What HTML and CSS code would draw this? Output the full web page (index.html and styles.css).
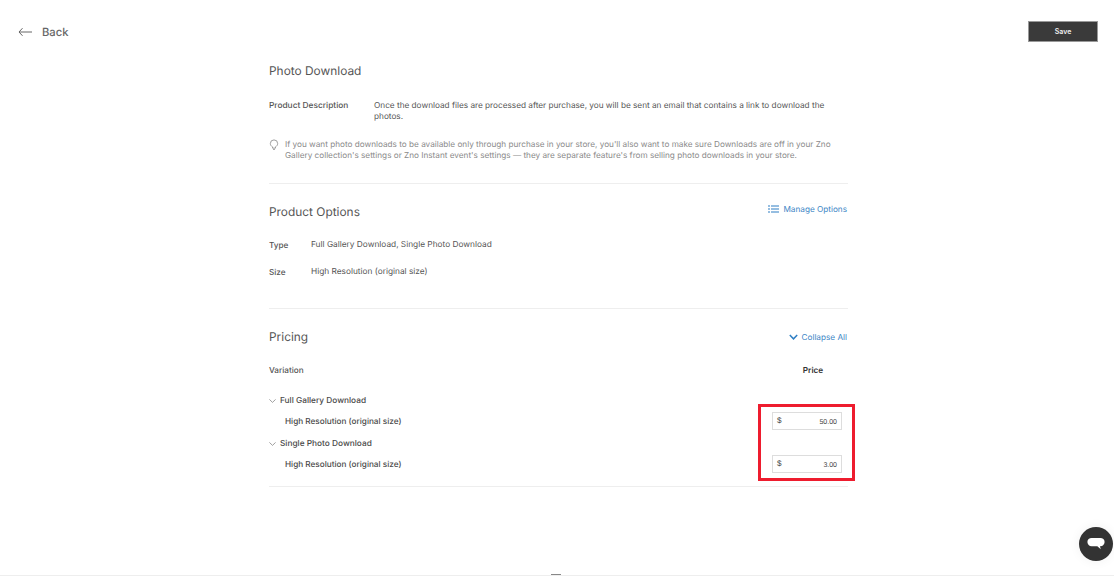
FILE: index.html
```html
<!DOCTYPE html>
<html lang="en">
<head>
<meta charset="utf-8">
<title>Photo Download</title>
<link rel="stylesheet" href="styles.css">
</head>
<body>
<div class="page">
  <header class="topbar">
    <a class="back">
      <svg class="back-icon" width="14" height="10" viewBox="0 0 14 10"><path d="M4.500 1.200 1 5l3.500 3.800M1 5h13" fill="none" stroke="#666" stroke-width="1"/></svg>
      <span>Back</span>
    </a>
    <button class="save">Save</button>
  </header>
  <main class="content">
    <section class="sec-desc">
      <h2 class="title">Photo Download</h2>
      <div class="desc-row">
        <div class="desc-label">Product Description</div>
        <div class="desc-text">Once the download files are processed after purchase, you will be sent an email that contains a link to download the photos.</div>
      </div>
      <div class="tip">
        <svg class="tip-icon" width="10" height="11" viewBox="0 0 10 12"><path d="M3.400 8.600C2.200 7.900 1 6.800 1 5a4 4 0 0 1 8 0c0 1.800-1.200 2.900-2.400 3.600V10H3.400zM4 11.400h2" fill="none" stroke="#8a8a8a" stroke-width=".9"/></svg>
        <p>If you want photo downloads to be available only through purchase in your store, you'll also want to make sure Downloads are off in your Zno Gallery collection's settings or Zno Instant event's settings — they are separate feature's from selling photo downloads in your store.</p>
      </div>
    </section>
    <section class="sec-options">
      <div class="sec-head">
        <h2 class="title">Product Options</h2>
        <a class="link link-manage">
          <svg width="11" height="8" viewBox="0 0 11 8"><path d="M0 1h2M3 1h8M0 4h2M3 4h8M0 7h2M3 7h8" stroke="#2f7fc4" stroke-width="1.100"/></svg>
          <span>Manage Options</span>
        </a>
      </div>
      <div class="opt-row"><span class="opt-label">Type</span><span class="opt-value">Full Gallery Download, Single Photo Download</span></div>
      <div class="opt-row"><span class="opt-label">Size</span><span class="opt-value">High Resolution (original size)</span></div>
    </section>
    <section class="sec-pricing">
      <div class="sec-head">
        <h2 class="title">Pricing</h2>
        <a class="link link-collapse">
          <svg width="9" height="6" viewBox="0 0 9 6"><path d="M.8 1 4.500 4.800 8.200 1" fill="none" stroke="#2f7fc4" stroke-width="1.500"/></svg>
          <span>Collapse All</span>
        </a>
      </div>
      <div class="price-head"><span class="var-head">Variation</span><span class="price-col">Price</span></div>
      <div class="group">
        <div class="group-name"><svg width="7" height="4" viewBox="0 0 7 4"><path d="M.4.400 3.500 3.400 6.600.400" fill="none" stroke="#888" stroke-width=".8"/></svg><span>Full Gallery Download</span></div>
        <div class="variant"><span>High Resolution (original size)</span><div class="price-input"><span>$</span><span class="amount">50.00</span></div></div>
      </div>
      <div class="group">
        <div class="group-name"><svg width="7" height="4" viewBox="0 0 7 4"><path d="M.4.400 3.500 3.400 6.600.400" fill="none" stroke="#888" stroke-width=".8"/></svg><span>Single Photo Download</span></div>
        <div class="variant"><span>High Resolution (original size)</span><div class="price-input"><span>$</span><span class="amount">3.00</span></div></div>
      </div>
      <div class="highlight"></div>
    </section>
  </main>
  <div class="handle"></div>
  <div class="chat">
    <svg width="18" height="15" viewBox="0 0 20 17"><path d="M5 1h10a4 4 0 0 1 0 9.500h-.5l.9 3.500-3.900-3.500H5A4 4 0 0 1 5 1z" fill="#fff"/></svg>
  </div>
</div>
</body>
</html>
```
FILE: styles.css
```css
* { box-sizing: border-box; }
html, body { margin: 0; padding: 0; background: #fff; }
body { font-family: Inter, "Liberation Sans", sans-serif; color: #555; font-size: 8.2px; text-rendering: geometricPrecision; }
.page { position: relative; width: 1114px; height: 576px; overflow: hidden; border-bottom: 1px solid #eee; }
.topbar { display: flex; justify-content: space-between; align-items: flex-start; padding: 21px 16px 0 18px; height: 62px; }
.back { display: flex; align-items: center; gap: 10px; height: 21px; font-size: 11.2px; font-weight: 500; color: #666; }
.back-icon { display: block; }
.save { width: 70px; height: 21px; border: 1px solid #999; background: #3a3a3a; color: #eee; font: 600 7px Inter, sans-serif; padding: 0; }
.content { width: 579px; margin-left: 269px; }
.title { margin: 0; font-size: 11.9px; font-weight: 400; color: #555; line-height: 18px; }
.sec-desc { height: 122px; border-bottom: 1px solid #eee; }
.desc-row { display: flex; margin-top: 20px; line-height: 11px; }
.desc-label { width: 105px; flex: none; font-weight: 500; font-size: 8.35px; padding-top: 1px; }
.desc-text { width: 458px; color: #555; font-size: 8.23px; }
.tip { display: flex; gap: 6px; margin-top: 17px; color: #8a8a8a; line-height: 11px; }
.tip p { margin: 0; width: 556px; }
.tip-icon { flex: none; margin-top: 0; }
.sec-options { height: 125px; border-bottom: 1px solid #eee; padding-top: 19px; }
.sec-head { display: flex; justify-content: space-between; align-items: flex-start; }
.link { display: flex; align-items: center; gap: 5px; color: #3d86c6; line-height: 12px; padding-right: 1px; }
.link-manage { gap: 4px; }
.link-collapse { gap: 4px; margin-top: 3px; }
.opt-row { display: flex; line-height: 11px; margin-top: 16px; }
.sec-options .sec-head + .opt-row { margin-top: 19px; }
.opt-label { width: 42px; font-weight: 500; }
.opt-value { font-size: 8.3px; }
.sec-pricing { position: relative; height: 178px; border-bottom: 1px solid #eee; padding-top: 19px; }
.price-head { display: flex; justify-content: space-between; margin-top: 19px; line-height: 11px; }
.var-head { font-weight: 500; }
.price-col { width: 70px; text-align: center; font-weight: 600; color: #333; }
.group { height: 43px; }
.price-head + .group { margin-top: 19px; }
.group-name { display: flex; align-items: center; gap: 4px; height: 11px; padding-top: 1px; color: #4a4a4a; font-weight: 500; font-size: 8.3px; }
.variant { display: flex; justify-content: space-between; align-items: center; height: 18px; margin-top: 6px; padding: 0 6px 0 16px; color: #4a4a4a; font-size: 8.2px; font-weight: 500; }
.price-input { display: flex; justify-content: space-between; width: 70px; height: 18px; padding: 2px 4px 0 4px; border: 1px solid #ddd; color: #444; line-height: 11px; font-family: "Liberation Sans", sans-serif; }
.amount { padding-top: 2px; font-size: 7px; color: #444; }
.highlight { position: absolute; left: 489px; top: 95px; width: 97px; height: 77px; border: 3px solid #ee1c2e; }
.handle { position: absolute; left: 551px; bottom: 0; width: 10px; height: 1px; background: #888; }
.chat { position: absolute; left: 1079px; top: 527px; width: 34px; height: 34px; border-radius: 50%; background: #333; display: flex; align-items: center; justify-content: center; box-shadow: 0 0 12px rgba(0,0,0,.06); }
```
